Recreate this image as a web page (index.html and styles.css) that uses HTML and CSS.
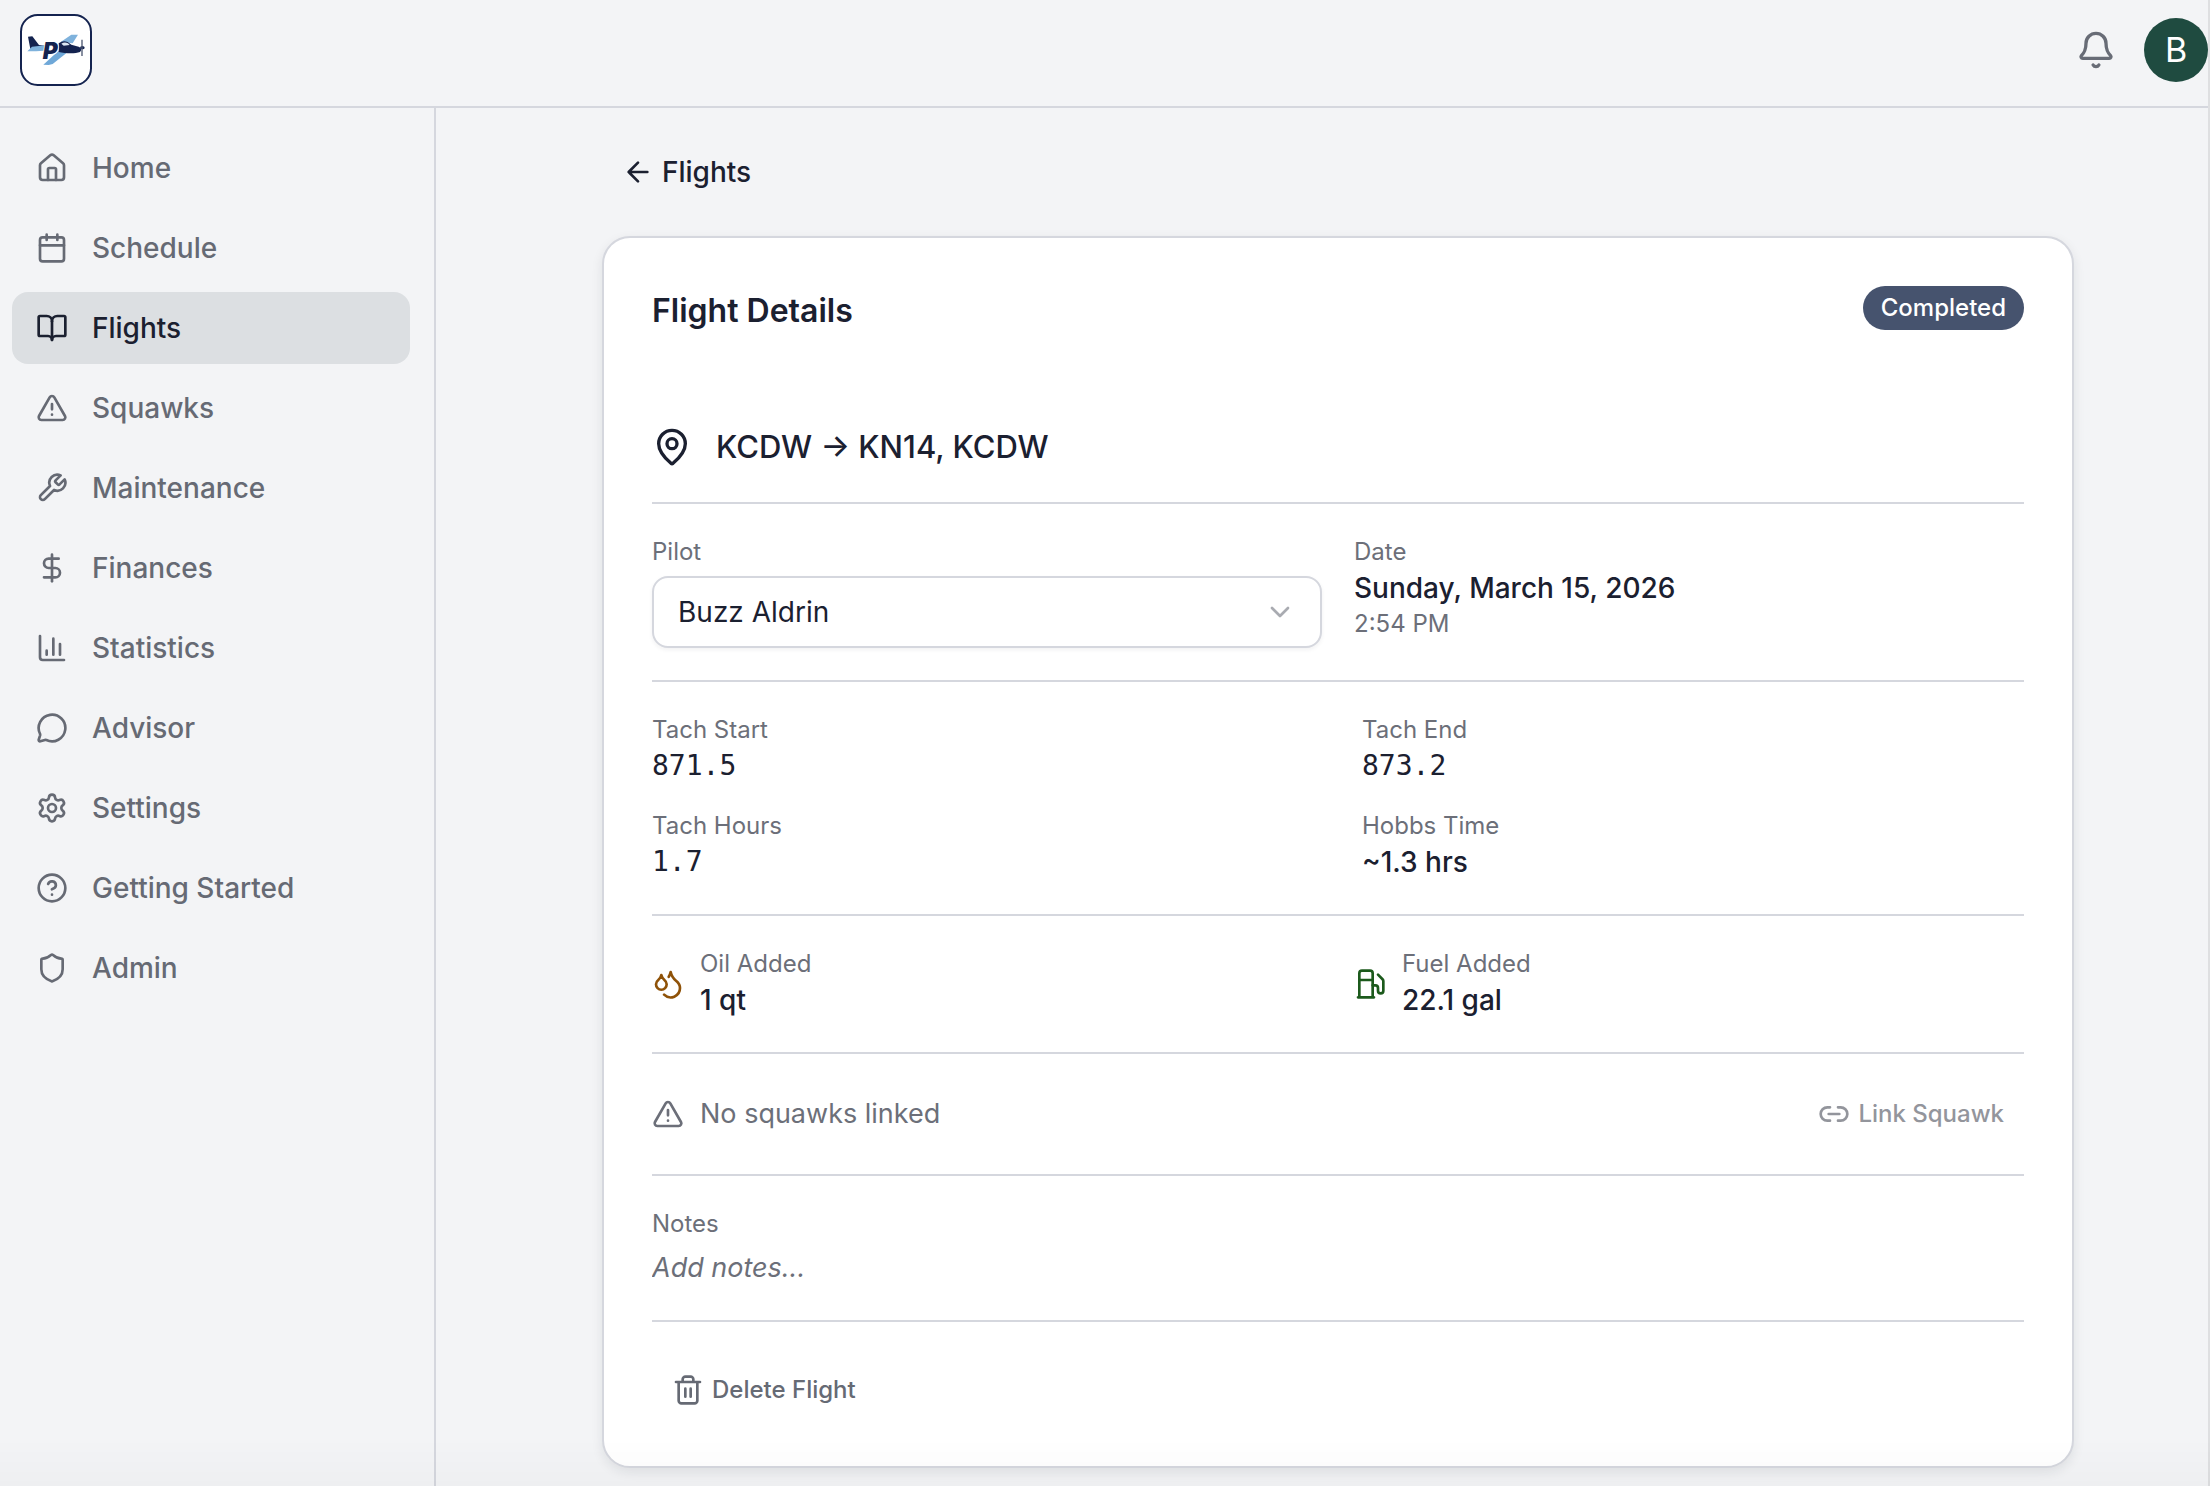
FILE: index.html
```
<!DOCTYPE html>
<html lang="en">
<head>
<meta charset="utf-8">
<meta name="viewport" content="width=device-width, initial-scale=1">
<title>Flight Details</title>
<link rel="stylesheet" href="styles.css">
</head>

<body>
<header class="topbar">
  <a href="#" class="logo" aria-label="Dashboard">
    <svg viewBox="0 0 216 216">
      <rect x="3" y="3" width="210" height="210" rx="50" fill="#fff" stroke="#14234f" stroke-width="6"/>
      <path d="M24 68l13-1 20 26 22 3-4 12-44-3z" fill="#14234f"/>
      <path d="M22 112l14-14 40-4-4 16-24 2z" fill="#7fb2dc"/>
      <path d="M122 84l32-22h20l-16 26z" fill="#7fb2dc"/>
      <path d="M70 152l44-40 34-2-50 40-12 3z" fill="#6fa8d8"/>
      <path d="M116 88c12-9 24-9 38 4l22 6c8 4 10 10 4 16-16 6-44 4-64 0z" fill="#14234f"/>
      <path d="M124 89c8-5 18-5 25 4l-18 2z" fill="#dce8f3"/>
      <ellipse cx="187" cy="101" rx="7" ry="5" fill="#14234f"/>
      <path d="M186 77v49" stroke="#4d5871" stroke-width="4"/>
      <text x="68" y="134" class="logo-letter">P</text>
    </svg>
  </a>
  <div class="topbar-right">
    <button class="bell" aria-label="Notifications">
      <svg class="icon icon-lg" viewBox="0 0 24 24"><path d="M10.268 21a2 2 0 0 0 3.464 0"/><path d="M3.262 15.326A1 1 0 0 0 4 17h16a1 1 0 0 0 .74-1.673C19.41 13.956 18 12.499 18 8A6 6 0 0 0 6 8c0 4.499-1.411 5.956-2.738 7.326"/></svg>
    </button>
    <button class="avatar">B</button>
  </div>
</header>

<div class="layout">
<nav class="sidebar">
  <a href="#"><svg class="icon" viewBox="0 0 24 24"><path d="M15 21v-8a1 1 0 0 0-1-1h-4a1 1 0 0 0-1 1v8"/><path d="M3 10a2 2 0 0 1 .709-1.528l7-6a2 2 0 0 1 2.582 0l7 6A2 2 0 0 1 21 10v9a2 2 0 0 1-2 2H5a2 2 0 0 1-2-2z"/></svg>Home</a>
  <a href="#"><svg class="icon" viewBox="0 0 24 24"><path d="M8 2v4M16 2v4M3 10h18"/><rect x="3" y="4" width="18" height="18" rx="2"/></svg>Schedule</a>
  <a href="#" class="active"><svg class="icon" viewBox="0 0 24 24"><path d="M12 7v14"/><path d="M3 18a1 1 0 0 1-1-1V4a1 1 0 0 1 1-1h5a4 4 0 0 1 4 4 4 4 0 0 1 4-4h5a1 1 0 0 1 1 1v13a1 1 0 0 1-1 1h-6a3 3 0 0 0-3 3 3 3 0 0 0-3-3z"/></svg>Flights</a>
  <a href="#"><svg class="icon" viewBox="0 0 24 24"><path d="m21.73 18-8-14a2 2 0 0 0-3.48 0l-8 14A2 2 0 0 0 4 21h16a2 2 0 0 0 1.73-3"/><path d="M12 9v4M12 17h.01"/></svg>Squawks</a>
  <a href="#"><svg class="icon" viewBox="0 0 24 24"><path d="M14.7 6.3a1 1 0 0 0 0 1.4l1.6 1.6a1 1 0 0 0 1.4 0l3.77-3.77a6 6 0 0 1-7.94 7.94l-6.91 6.91a2.12 2.12 0 0 1-3-3l6.91-6.91a6 6 0 0 1 7.94-7.94l-3.76 3.76z"/></svg>Maintenance</a>
  <a href="#"><svg class="icon" viewBox="0 0 24 24"><path d="M12 2v20"/><path d="M17 5H9.5a3.5 3.5 0 0 0 0 7h5a3.5 3.5 0 0 1 0 7H6"/></svg>Finances</a>
  <a href="#"><svg class="icon" viewBox="0 0 24 24"><path d="M3 3v16a2 2 0 0 0 2 2h16"/><path d="M18 17V9M13 17V5M8 17v-3"/></svg>Statistics</a>
  <a href="#"><svg class="icon" viewBox="0 0 24 24"><path d="M2.992 16.342a2 2 0 0 1 .094 1.167l-1.065 3.29a1 1 0 0 0 1.236 1.168l3.413-.998a2 2 0 0 1 1.099.092 10 10 0 1 0-4.777-4.719"/></svg>Advisor</a>
  <a href="#"><svg class="icon" viewBox="0 0 24 24"><path d="M9.671 4.136a2.34 2.34 0 0 1 4.659 0 2.34 2.34 0 0 0 3.319 1.915 2.34 2.34 0 0 1 2.33 4.033 2.34 2.34 0 0 0 0 3.831 2.34 2.34 0 0 1-2.33 4.033 2.34 2.34 0 0 0-3.319 1.915 2.34 2.34 0 0 1-4.659 0 2.34 2.34 0 0 0-3.32-1.915 2.34 2.34 0 0 1-2.33-4.033 2.34 2.34 0 0 0 0-3.831A2.34 2.34 0 0 1 6.35 6.051a2.34 2.34 0 0 0 3.319-1.915"/><circle cx="12" cy="12" r="3"/></svg>Settings</a>
  <a href="#"><svg class="icon" viewBox="0 0 24 24"><circle cx="12" cy="12" r="10"/><path d="M9.09 9a3 3 0 0 1 5.83 1c0 2-3 3-3 3M12 17h.01"/></svg>Getting Started</a>
  <a href="#"><svg class="icon" viewBox="0 0 24 24"><path d="M20 13c0 5-3.5 7.5-7.66 8.95a1 1 0 0 1-.67-.01C7.5 20.5 4 18 4 13V6a1 1 0 0 1 1-1c2 0 4.5-1.2 6.24-2.72a1.17 1.17 0 0 1 1.52 0C14.51 3.81 17 5 19 5a1 1 0 0 1 1 1z"/></svg>Admin</a>
</nav>

<main class="main">
<div class="content">
  <a href="#" class="back"><svg class="icon" viewBox="0 0 24 24"><path d="m12 19-7-7 7-7M19 12H5"/></svg>Flights</a>

  <section class="card">
    <div class="card-head">
      <h1>Flight Details</h1>
      <span class="badge">Completed</span>
    </div>

    <div class="route">
      <svg class="icon icon-lg" viewBox="0 0 24 24"><path d="M20 10c0 4.993-5.539 10.193-7.399 11.799a1 1 0 0 1-1.202 0C9.539 20.193 4 14.993 4 10a8 8 0 0 1 16 0"/><circle cx="12" cy="10" r="3"/></svg>
      <span>KCDW → KN14, KCDW</span>
    </div>

    <div class="row two-col">
      <div>
        <label class="label" for="pilot">Pilot</label>
        <div class="select-wrap">
          <select id="pilot">
            <option>Buzz Aldrin</option>
          </select>
          <svg class="icon chevron" viewBox="0 0 24 24"><path d="m6 9 6 6 6-6"/></svg>
        </div>
      </div>
      <div>
        <p class="label">Date</p>
        <p class="value">Sunday, March 15, 2026</p>
        <p class="label">2:54 PM</p>
      </div>
    </div>

    <div class="row two-col tach">
      <div>
        <p class="label">Tach Start</p>
        <p class="value mono">871.5</p>
      </div>
      <div>
        <p class="label">Tach End</p>
        <p class="value mono">873.2</p>
      </div>
      <div>
        <p class="label">Tach Hours</p>
        <p class="value mono">1.7</p>
      </div>
      <div>
        <p class="label">Hobbs Time</p>
        <p class="value">~1.3 hrs</p>
      </div>
    </div>

    <div class="row two-col">
      <div class="fluid">
        <svg class="icon oil" viewBox="0 0 24 24"><path d="M7 16.3c2.2 0 4-1.83 4-4.05 0-1.16-.57-2.26-1.71-3.19S7.29 6.75 7 5.3c-.29 1.45-1.14 2.84-2.29 3.76S3 11.1 3 12.25c0 2.22 1.8 4.05 4 4.05z"/><path d="M12.56 6.6A10.97 10.97 0 0 0 14 3.02c.5 2.5 2 4.9 4 6.5s3 3.5 3 5.5a6.98 6.98 0 0 1-11.91 4.97"/></svg>
        <div>
          <p class="label">Oil Added</p>
          <p class="value">1 qt</p>
        </div>
      </div>
      <div class="fluid">
        <svg class="icon fuel" viewBox="0 0 24 24"><path d="M3 22h12M4 9h10M14 22V4a2 2 0 0 0-2-2H6a2 2 0 0 0-2 2v18"/><path d="M14 13h2a2 2 0 0 1 2 2v2a2 2 0 0 0 4 0V9.83a2 2 0 0 0-.59-1.42L18 5"/></svg>
        <div>
          <p class="label">Fuel Added</p>
          <p class="value">22.1 gal</p>
        </div>
      </div>
    </div>

    <div class="row squawks">
      <p class="no-squawks"><svg class="icon" viewBox="0 0 24 24"><path d="m21.73 18-8-14a2 2 0 0 0-3.48 0l-8 14A2 2 0 0 0 4 21h16a2 2 0 0 0 1.73-3"/><path d="M12 9v4M12 17h.01"/></svg>No squawks linked</p>
      <button class="btn link-btn"><svg class="icon" viewBox="0 0 24 24"><path d="M9 17H7A5 5 0 0 1 7 7h2M15 7h2a5 5 0 1 1 0 10h-2M8 12h8"/></svg>Link Squawk</button>
    </div>

    <div class="row">
      <label class="label" for="notes">Notes</label>
      <textarea id="notes" class="notes" rows="1" placeholder="Add notes..."></textarea>
    </div>

    <div class="row actions">
      <button class="btn delete-btn"><svg class="icon" viewBox="0 0 24 24"><path d="M3 6h18M19 6v14c0 1-1 2-2 2H7c-1 0-2-1-2-2V6M8 6V4c0-1 1-2 2-2h4c1 0 2 1 2 2v2M10 11v6M14 11v6"/></svg>Delete Flight</button>
    </div>
  </section>
</div>
</main>
</div>
<div class="bottom-fade"></div>
</body>
</html>
```
FILE: styles.css
```
* {
  box-sizing: border-box;
}

body {
  margin: 0;
  min-height: 100vh;
  display: flex;
  flex-direction: column;
  background-color: #f3f4f6;
  border-right: 2px solid #dedfe1;
  color: #1b2030;
  font-family: Inter, "Liberation Sans", sans-serif;
  font-size: 28px;
  line-height: 40px;
}

h1, p {
  margin: 0;
}

a {
  color: inherit;
  text-decoration: none;
}

button, select, textarea {
  font: inherit;
  color: inherit;
  background: none;
  border: 0;
  padding: 0;
  margin: 0;
}

button {
  cursor: pointer;
}

.icon {
  width: 32px;
  height: 32px;
  flex-shrink: 0;
  fill: none;
  stroke: currentColor;
  stroke-width: 2;
  stroke-linecap: round;
  stroke-linejoin: round;
}

.icon-lg {
  width: 40px;
  height: 40px;
}

/* top bar */
.topbar {
  display: flex;
  justify-content: space-between;
  align-items: center;
  padding: 14px 0 20px 20px;
  border-bottom: 2px solid #d5d7de;
}

.logo, .logo svg {
  display: block;
  width: 72px;
  height: 72px;
}

.logo-letter {
  font-size: 68px;
  font-weight: 900;
  font-style: italic;
  fill: #14234f;
  stroke: #fff;
  stroke-width: 5;
  paint-order: stroke;
}

.topbar-right {
  display: flex;
  align-items: center;
  gap: 28px;
}

.bell {
  display: flex;
  color: #686c76;
}

.avatar {
  width: 64px;
  height: 64px;
  border-radius: 50%;
  background-color: #1f4b40;
  color: #fff;
  font-size: 34px;
}

/* sidebar */
.layout {
  display: flex;
  flex: 1;
}

.sidebar {
  width: 436px;
  flex-shrink: 0;
  display: flex;
  flex-direction: column;
  gap: 8px;
  padding: 24px 24px 24px 12px;
  border-right: 2px solid #d5d7de;
  color: #666a74;
  font-weight: 500;
}

.sidebar a {
  display: flex;
  align-items: center;
  gap: 24px;
  padding: 16px 24px;
  border-radius: 16px;
}

.sidebar .active {
  background-color: #dcdfe2;
  color: #1b2030;
}

/* main column */
.main {
  flex: 1;
  padding: 28px 0 16px 32px;
}

.content {
  max-width: 1472px;
  margin: 0 auto;
}

.back {
  display: inline-flex;
  align-items: center;
  gap: 8px;
  padding: 16px 20px;
  margin-bottom: 28px;
  font-weight: 500;
}

.card {
  background-color: #fff;
  border: 2px solid #d5d7de;
  border-radius: 28px;
  padding: 48px 48px 40px;
  box-shadow: 0 4px 12px rgba(27, 32, 48, 0.09);
}

.card-head {
  display: flex;
  justify-content: space-between;
  align-items: flex-start;
  margin-bottom: 86px;
}

h1 {
  font-size: 32px;
  line-height: 50px;
  font-weight: 600;
}

.badge {
  padding: 6px 18px;
  border-radius: 22px;
  background-color: #46536e;
  color: #fff;
  font-size: 24px;
  line-height: 32px;
  font-weight: 500;
}

.route {
  display: flex;
  align-items: center;
  gap: 24px;
  padding-bottom: 30px;
  font-size: 31px;
  line-height: 50px;
  font-weight: 500;
}

.row {
  padding: 32px 0;
  border-top: 2px solid #d5d7de;
}

.two-col {
  display: grid;
  grid-template-columns: 1fr 1fr;
  gap: 32px;
}

.tach {
  gap: 24px 48px;
}

.label {
  display: block;
  color: #6c6f79;
  font-size: 24px;
  line-height: 32px;
}

.value {
  font-weight: 500;
}

.mono {
  font-family: "DejaVu Sans Mono", monospace;
}

.select-wrap {
  position: relative;
  margin-top: 8px;
}

.select-wrap select {
  display: block;
  width: 100%;
  height: 72px;
  padding: 0 72px 0 24px;
  appearance: none;
  border: 2px solid #d5d7de;
  border-radius: 16px;
  background-color: #fff;
  box-shadow: 0 2px 4px rgba(27, 32, 48, 0.06);
}

.chevron {
  position: absolute;
  right: 26px;
  top: 20px;
  color: #a9abb1;
  pointer-events: none;
}

.fluid {
  display: flex;
  align-items: center;
  gap: 16px;
}

.oil {
  color: #8f5208;
}

.fuel {
  color: #1c5a1c;
}

.squawks {
  display: flex;
  justify-content: space-between;
  align-items: center;
}

.no-squawks {
  display: flex;
  align-items: center;
  gap: 16px;
  color: #6c6f79;
  font-size: 27px;
}

.btn {
  display: flex;
  align-items: center;
  gap: 8px;
  height: 56px;
  padding: 0 20px;
  font-size: 24px;
  font-weight: 500;
}

.link-btn {
  color: #93959c;
}

.notes {
  display: block;
  width: 100%;
  height: 40px;
  margin-top: 8px;
  resize: none;
  overflow: hidden;
  font-size: 27px;
}

.notes::placeholder {
  color: #6c6f79;
  font-style: italic;
  opacity: 1;
}

.actions {
  padding-bottom: 0;
}

.delete-btn {
  height: 72px;
  color: #666a74;
}

/* soft shade along the bottom of the window */
.bottom-fade {
  position: fixed;
  left: 0;
  right: 0;
  bottom: 0;
  height: 48px;
  background-image: linear-gradient(rgba(0, 0, 0, 0), rgba(0, 0, 0, 0.02));
  pointer-events: none;
}
```
